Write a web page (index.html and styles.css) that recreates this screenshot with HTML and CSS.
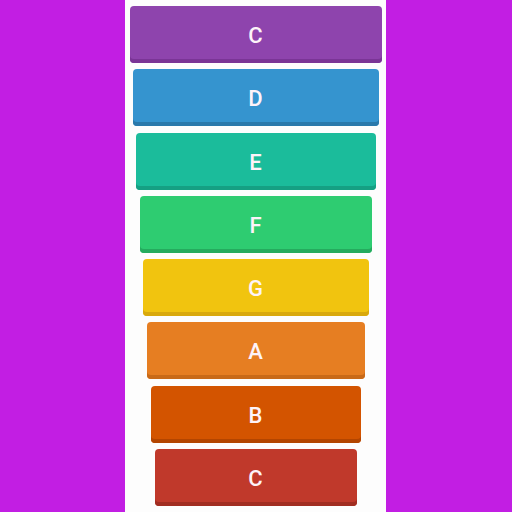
FILE: index.html
```html
<!DOCTYPE html>
<html>
<head>
<meta charset="utf-8">
<link rel="stylesheet" href="styles.css">
</head>
<body>
<div class="panel">
  <div class="key k1">C</div>
  <div class="key k2">D</div>
  <div class="key k3">E</div>
  <div class="key k4">F</div>
  <div class="key k5">G</div>
  <div class="key k6">A</div>
  <div class="key k7">B</div>
  <div class="key k8">C</div>
</div>
</body>
</html>
```
FILE: styles.css
```css
html, body {
  margin: 0;
  padding: 0;
  background: #c21ee3;
  height: 512px;
  overflow: hidden;
}
.panel {
  width: 261px;
  height: 512px;
  margin-left: 125px;
  background: #fdfdfd;
  display: flex;
  flex-direction: column;
  align-items: center;
  padding-top: 6px;
  box-sizing: border-box;
  gap: 6.3px;
}
.key {
  height: 57px;
  flex: none;
  border-radius: 4px;
  display: flex;
  align-items: center;
  justify-content: center;
  font-family: Roboto, "Liberation Sans", sans-serif;
  font-weight: 500;
  font-size: 22px;
  color: #fdf3f9;
  padding-top: 2px;
  box-sizing: border-box;
}
.k1 { width: 252px; background: #8e44ad; box-shadow: inset 0 -4px 0 #7a3596; }
.k2 { width: 246px; background: #3594cf; box-shadow: inset 0 -4px 0 #2a79ab; }
.k3 { width: 240px; background: #1bbc9b; box-shadow: inset 0 -4px 0 #15a083; }
.k4 { width: 232px; background: #2ecc71; box-shadow: inset 0 -4px 0 #25ab5e; }
.k5 { width: 226px; background: #f1c40f; box-shadow: inset 0 -4px 0 #d9a90c; }
.k6 { width: 218px; background: #e67e22; box-shadow: inset 0 -4px 0 #c96a18; }
.k7 { width: 210px; background: #d35400; box-shadow: inset 0 -4px 0 #b34500; }
.k8 { width: 202px; background: #c0392b; box-shadow: inset 0 -4px 0 #a12d21; }
```
